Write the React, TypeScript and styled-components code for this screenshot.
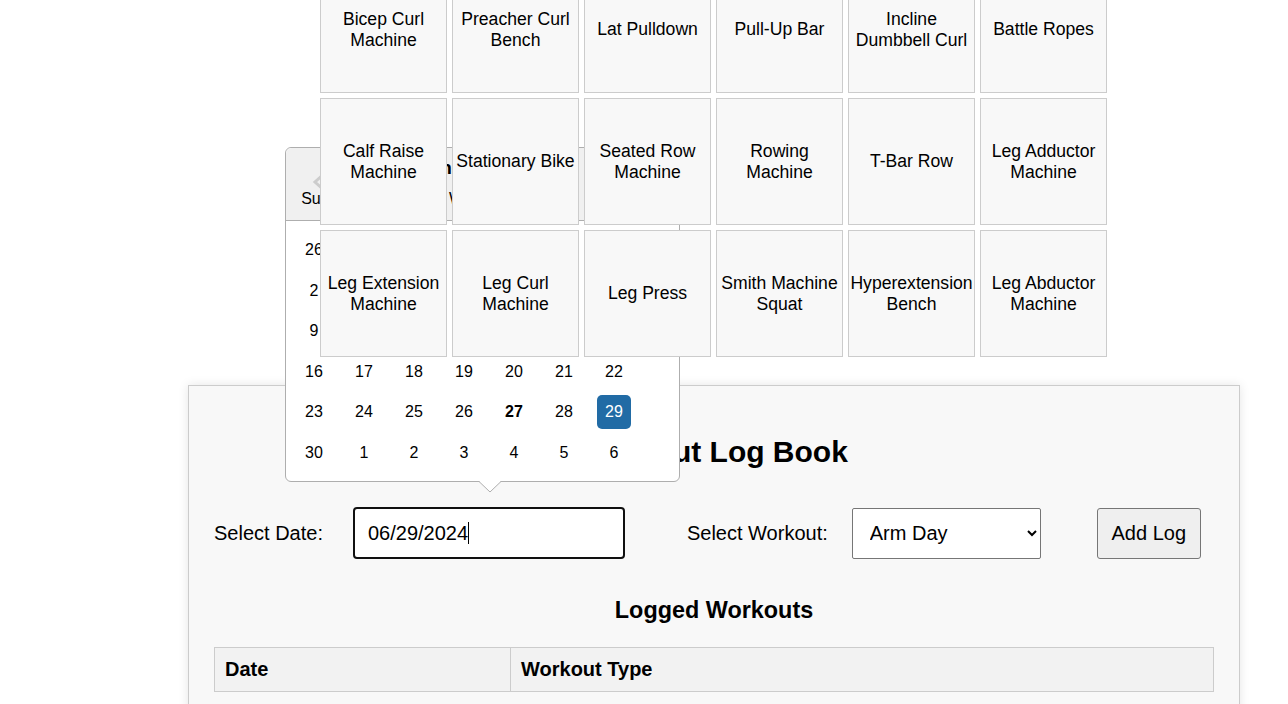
import React from 'react';
import styled, { createGlobalStyle } from 'styled-components';

const GlobalStyle = createGlobalStyle`
  html, body {
    margin: 0;
    padding: 0;
    overflow: hidden;
    background: #fff;
    font-family: "Liberation Sans", Arial, sans-serif;
    color: #000;
  }
`;

const Main = styled.main`
  margin-left: 139px;
  padding-bottom: 40px;
`;

const EquipmentGrid = styled.div`
  display: grid;
  grid-template-columns: repeat(6, 127px);
  gap: 5px;
  justify-content: center;
  margin-top: -34px;
  position: relative;
  z-index: 2;
`;

const EquipmentCard = styled.div`
  box-sizing: border-box;
  height: 127px;
  border: 1px solid #ccc;
  background: #f8f8f8;
  display: flex;
  align-items: center;
  justify-content: center;
  text-align: center;
  font-size: 17.6px;
  line-height: 21px;
`;

const LogBook = styled.section`
  width: 1000px;
  margin: 28px 0 0 49px;
  padding: 25px;
  border: 1px solid #ccc;
  background: #f8f8f8;
  box-shadow: 0 0 10px rgba(0, 0, 0, 0.1);
`;

const Title = styled.h2`
  font-size: 30px;
  line-height: 34.5px;
  margin: 24px 0 37.5px;
  text-align: center;
`;

const FormRow = styled.div`
  display: flex;
  align-items: center;
  height: 52px;
`;

const FieldLabel = styled.label<{ $gap: number }>`
  font-size: 20px;
  margin-right: ${p => p.$gap}px;
`;

const DateField = styled.div`
  position: relative;
  margin-right: 62px;
`;

const DateInput = styled.input`
  box-sizing: border-box;
  width: 272px;
  height: 52px;
  border: 2px solid #101010;
  border-radius: 4px;
  padding: 0 0 0 13px;
  font-family: inherit;
  font-size: 20px;
  color: #000;
  background: #fff;
  outline: none;
`;

const Caret = styled.span`
  position: absolute;
  left: 115px;
  top: 15px;
  width: 1px;
  height: 22px;
  background: #000;
`;

const WorkoutSelect = styled.select`
  box-sizing: border-box;
  width: 189px;
  height: 51px;
  margin-right: 56px;
  padding: 0 12px 0 13px;
  border: 1px solid #767676;
  border-radius: 2px;
  background: #fff;
  font-family: inherit;
  font-size: 20px;
  color: #000;
`;

const AddButton = styled.button`
  box-sizing: border-box;
  width: 104px;
  height: 51px;
  border: 1px solid #767676;
  border-radius: 3px;
  background: #efefef;
  font-family: inherit;
  font-size: 20px;
  color: #000;
  padding: 0;
`;

const SubTitle = styled.h3`
  font-size: 23.4px;
  line-height: 27px;
  margin: 37.5px 0 23.5px;
  text-align: center;
`;

const LogTable = styled.table`
  width: 100%;
  border-collapse: collapse;
`;

const HeadCell = styled.th<{ $width?: number }>`
  ${p => (p.$width ? `width: ${p.$width}px;` : '')}
  text-align: left;
  padding: 10px;
  border: 1px solid #ccc;
  background: #f2f2f2;
  font-size: 20px;
  line-height: 23px;
`;

/* date picker popup */

const Popup = styled.div`
  position: absolute;
  left: -68px;
  bottom: calc(100% + 25px);
  width: 395px;
  box-sizing: border-box;
  border: 1px solid #aeaeae;
  border-radius: 6px;
  background: #fff;
  z-index: 1;
  font-size: 16px;
`;

const PopupHeader = styled.div`
  position: relative;
  background: #f0f0f0;
  border-bottom: 1px solid #aeaeae;
  border-radius: 6px 6px 0 0;
  padding: 9px 0 4px 11px;
`;

const MonthTitle = styled.div`
  width: 334px;
  text-align: center;
  font-weight: bold;
  font-size: 19px;
  line-height: 22px;
`;

const WeekGrid = styled.div`
  display: grid;
  grid-template-columns: repeat(7, 34px);
  column-gap: 16px;
  row-gap: 6.6px;
`;

const DayName = styled.div`
  height: 34px;
  line-height: 34px;
  text-align: center;
  margin-top: 3px;
  text-indent: -6px;
`;

const PopupBody = styled.div`
  padding: 12px 0 11px 11px;
`;

const Day = styled.div<{ $selected?: boolean; $today?: boolean }>`
  width: 34px;
  height: 34px;
  line-height: 34px;
  text-align: center;
  border-radius: 5px;
  font-weight: ${p => (p.$today ? 'bold' : 'normal')};
  background: ${p => (p.$selected ? '#216ba5' : 'transparent')};
  color: ${p => (p.$selected ? '#fff' : '#000')};
`;

const NavArrow = styled.svg<{ $side: 'left' | 'right' }>`
  position: absolute;
  top: 27px;
  ${p => (p.$side === 'left' ? 'left: 26px;' : 'right: 26px;')}
`;

const Pointer = styled.svg`
  position: absolute;
  left: 193px;
  top: 100%;
`;

const equipment = [
  'Bicep Curl Machine', 'Preacher Curl Bench', 'Lat Pulldown', 'Pull-Up Bar', 'Incline Dumbbell Curl', 'Battle Ropes',
  'Calf Raise Machine', 'Stationary Bike', 'Seated Row Machine', 'Rowing Machine', 'T-Bar Row', 'Leg Adductor Machine',
  'Leg Extension Machine', 'Leg Curl Machine', 'Leg Press', 'Smith Machine Squat', 'Hyperextension Bench', 'Leg Abductor Machine',
];

const dayNames = ['Su', 'Mo', 'Tu', 'We', 'Th', 'Fr', 'Sa'];

const calendarDays = [
  26, 27, 28, 29, 30, 31, 1,
  2, 3, 4, 5, 6, 7, 8,
  9, 10, 11, 12, 13, 14, 15,
  16, 17, 18, 19, 20, 21, 22,
  23, 24, 25, 26, 27, 28, 29,
  30, 1, 2, 3, 4, 5, 6,
];

const Calendar: React.FC = () => (
  <Popup>
    <PopupHeader>
      <NavArrow $side="left" width="12" height="14" viewBox="0 0 12 14">
        <polyline points="9,1.5 3,7 9,12.5" fill="none" stroke="#ccc" strokeWidth="3" />
      </NavArrow>
      <NavArrow $side="right" width="12" height="14" viewBox="0 0 12 14">
        <polyline points="3,1.5 9,7 3,12.5" fill="none" stroke="#ccc" strokeWidth="3" />
      </NavArrow>
      <MonthTitle>June 2024</MonthTitle>
      <WeekGrid>
        {dayNames.map(d => (
          <DayName key={d}>{d}</DayName>
        ))}
      </WeekGrid>
    </PopupHeader>
    <PopupBody>
      <WeekGrid>
        {calendarDays.map((d, i) => (
          <Day key={i} $today={i === 32} $selected={i === 34}>
            {d}
          </Day>
        ))}
      </WeekGrid>
    </PopupBody>
    <Pointer width="22" height="12" viewBox="0 0 22 12">
      <polygon points="0,0 11,11 22,0" fill="#fff" />
      <polyline points="0,0.5 11,11 22,0.5" fill="none" stroke="#aeaeae" strokeWidth="1" />
    </Pointer>
  </Popup>
);

export default function App() {
  return (
    <>
      <GlobalStyle />
      <Main>
        <EquipmentGrid>
          {equipment.map(name => (
            <EquipmentCard key={name}>{name}</EquipmentCard>
          ))}
        </EquipmentGrid>

        <LogBook>
          <Title>Workout Log Book</Title>
          <FormRow>
            <FieldLabel $gap={30}>Select Date:</FieldLabel>
            <DateField>
              <DateInput value="06/29/2024" readOnly />
              <Caret />
              <Calendar />
            </DateField>
            <FieldLabel $gap={24}>Select Workout:</FieldLabel>
            <WorkoutSelect defaultValue="Arm Day">
              <option>Arm Day</option>
              <option>Leg Day</option>
              <option>Back Day</option>
              <option>Cardio</option>
            </WorkoutSelect>
            <AddButton>Add Log</AddButton>
          </FormRow>
          <SubTitle>Logged Workouts</SubTitle>
          <LogTable>
            <thead>
              <tr>
                <HeadCell $width={275}>Date</HeadCell>
                <HeadCell>Workout Type</HeadCell>
              </tr>
            </thead>
          </LogTable>
        </LogBook>
      </Main>
    </>
  );
}
